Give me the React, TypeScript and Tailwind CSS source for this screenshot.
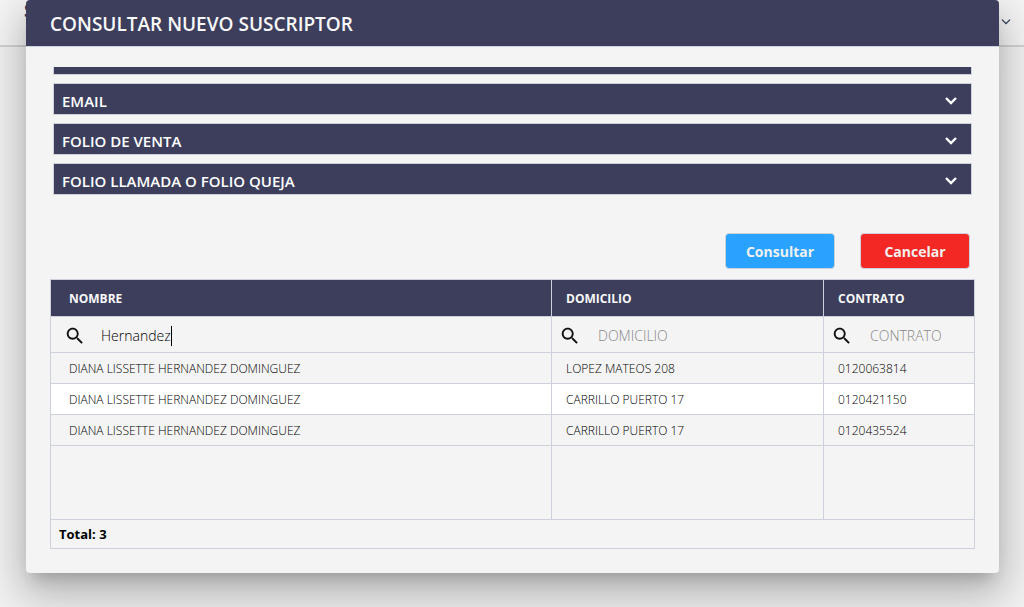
import { useState } from 'react';

const sections = ['EMAIL', 'FOLIO DE VENTA', 'FOLIO LLAMADA O FOLIO QUEJA'];

const rows = [
  { nombre: 'DIANA LISSETTE HERNANDEZ DOMINGUEZ', domicilio: 'LOPEZ MATEOS 208', contrato: '0120063814' },
  { nombre: 'DIANA LISSETTE HERNANDEZ DOMINGUEZ', domicilio: 'CARRILLO PUERTO 17', contrato: '0120421150' },
  { nombre: 'DIANA LISSETTE HERNANDEZ DOMINGUEZ', domicilio: 'CARRILLO PUERTO 17', contrato: '0120435524' },
];

function SearchIcon() {
  return (
    <svg viewBox="0 0 24 24" className="size-[22px] shrink-0 fill-[#111111]" aria-hidden="true">
      <path d="M15.5 14h-.79l-.28-.27C15.41 12.59 16 11.11 16 9.5 16 5.91 13.09 3 9.5 3S3 5.91 3 9.5 5.91 16 9.5 16c1.61 0 3.09-.59 4.23-1.57l.27.28v.79l5 4.99L20.49 19l-4.99-5zm-6 0C7.01 14 5 11.99 5 9.5S7.01 5 9.5 5 14 7.01 14 9.5 11.99 14 9.5 14z" />
    </svg>
  );
}

function Chevron({ className }: { className: string }) {
  return (
    <svg viewBox="0 0 14 10" className={className} fill="none" aria-hidden="true">
      <path d="M2 2l5 5 5-5" />
    </svg>
  );
}

function Section({ title }: { title: string }) {
  return (
    <button
      type="button"
      aria-expanded="false"
      className="flex h-8 w-full shrink-0 items-center justify-between border border-[#cdd1dc] bg-[#3c3e5c] pt-1 pr-[13px] pl-2 text-left text-[15px] font-semibold text-white"
    >
      <span>{title}</span>
      <Chevron className="h-[10px] w-[14px] stroke-white stroke-[2.4]" />
    </button>
  );
}

export default function App() {
  const [nombre, setNombre] = useState('Hernandez');

  return (
    <div className="relative min-h-screen bg-[#f2f2f2] font-['Open_Sans','Noto_Sans',sans-serif] text-black">
      <header className="flex h-[47px] justify-between border-b-2 border-[#d2d2d2] bg-[#f5f5f5] pr-3 pl-6">
        <span className="text-lg/5 font-bold text-[#202a55]">S</span>
        <Chevron className="mt-[18px] h-[8px] w-[12px] stroke-[#26384f] stroke-[1.6]" />
      </header>

      <div className="absolute inset-x-0 top-0 pr-[25px] pl-[26px]">
        <div
          role="dialog"
          aria-labelledby="dialog-title"
          className="overflow-hidden rounded bg-[#f4f4f4] shadow-[0_11px_15px_-7px_rgba(0,0,0,0.2),0_24px_38px_3px_rgba(0,0,0,0.14),0_9px_46px_8px_rgba(0,0,0,0.12)]"
        >
          <h2
            id="dialog-title"
            className="flex h-[47px] items-center border-b border-[#cdd1dc] bg-[#3c3e5c] px-6 pt-[2px] text-[19px] font-semibold text-[#f8f8f8]"
          >
            CONSULTAR NUEVO SUSCRIPTOR
          </h2>

          <div className="px-6 pt-5 pb-6">
            <div className="flex h-32 flex-col justify-end gap-2 overflow-hidden pr-[3px] pl-[3px]">
              <div className="h-8 shrink-0 border border-[#cdd1dc] bg-[#3c3e5c]" />
              {sections.map((title) => (
                <Section key={title} title={title} />
              ))}
            </div>

            <div className="mt-[38px] flex justify-end gap-[25px] pr-[5px]">
              <button
                type="button"
                className="h-9 w-[110px] rounded border border-[#cdd1dc] bg-[#29a3ff] pt-[2px] text-sm font-bold text-[#f0f0f0]"
              >
                Consultar
              </button>
              <button
                type="button"
                className="h-9 w-[110px] rounded border border-[#cdd1dc] bg-[#f32825] pt-[2px] text-sm font-bold text-[#f0f0f0]"
              >
                Cancelar
              </button>
            </div>

            <table className="mt-[10px] w-full table-fixed border-separate border-spacing-0 border-t border-l border-[#cdd1dc] text-left text-xs [&_td]:border-r [&_td]:border-b [&_td]:border-[#cdd1dc] [&_td]:pt-[2px] [&_th]:border-r [&_th]:border-b [&_th]:border-[#cdd1dc] [&_th]:pt-[2px]">
              <colgroup>
                <col />
                <col className="w-[272px]" />
                <col className="w-[151px]" />
              </colgroup>
              <thead>
                <tr className="h-[37px] bg-[#3c3e5c] text-[#f8f8f8]">
                  <th className="pl-[18px] font-bold">NOMBRE</th>
                  <th className="pl-[14px] font-bold">DOMICILIO</th>
                  <th className="pl-[14px] font-bold">CONTRATO</th>
                </tr>
                <tr className="h-9 text-sm">
                  <td className="pl-[13px]">
                    <label className="flex items-center pt-px">
                      <SearchIcon />
                      <input
                        aria-label="Nombre"
                        value={nombre}
                        onChange={(e) => setNombre(e.target.value)}
                        className="ml-[15px] [field-sizing:content] h-5 bg-transparent font-light text-black outline-none"
                      />
                      <span className="h-5 w-px bg-black" />
                    </label>
                  </td>
                  <td className="pl-[7px]">
                    <label className="flex items-center pt-px">
                      <SearchIcon />
                      <input
                        aria-label="Domicilio"
                        placeholder="DOMICILIO"
                        className="ml-[17px] h-5 w-full min-w-0 bg-transparent font-light outline-none placeholder:text-[#888888]"
                      />
                    </label>
                  </td>
                  <td className="pl-[7px]">
                    <label className="flex items-center pt-px">
                      <SearchIcon />
                      <input
                        aria-label="Contrato"
                        placeholder="CONTRATO"
                        className="ml-[17px] h-5 w-full min-w-0 bg-transparent font-light outline-none placeholder:text-[#888888]"
                      />
                    </label>
                  </td>
                </tr>
              </thead>
              <tbody>
                {rows.map((row) => (
                  <tr key={row.contrato} className="h-[31px] font-light even:bg-white">
                    <td className="pl-[18px]">{row.nombre}</td>
                    <td className="pl-[14px]">{row.domicilio}</td>
                    <td className="pl-[14px]">{row.contrato}</td>
                  </tr>
                ))}
                <tr className="h-[74px]">
                  <td />
                  <td />
                  <td />
                </tr>
              </tbody>
              <tfoot>
                <tr className="h-[29px] text-[13px]">
                  <td colSpan={3} className="pl-2 font-bold">
                    Total: {rows.length}
                  </td>
                </tr>
              </tfoot>
            </table>
          </div>
        </div>
      </div>
    </div>
  );
}
